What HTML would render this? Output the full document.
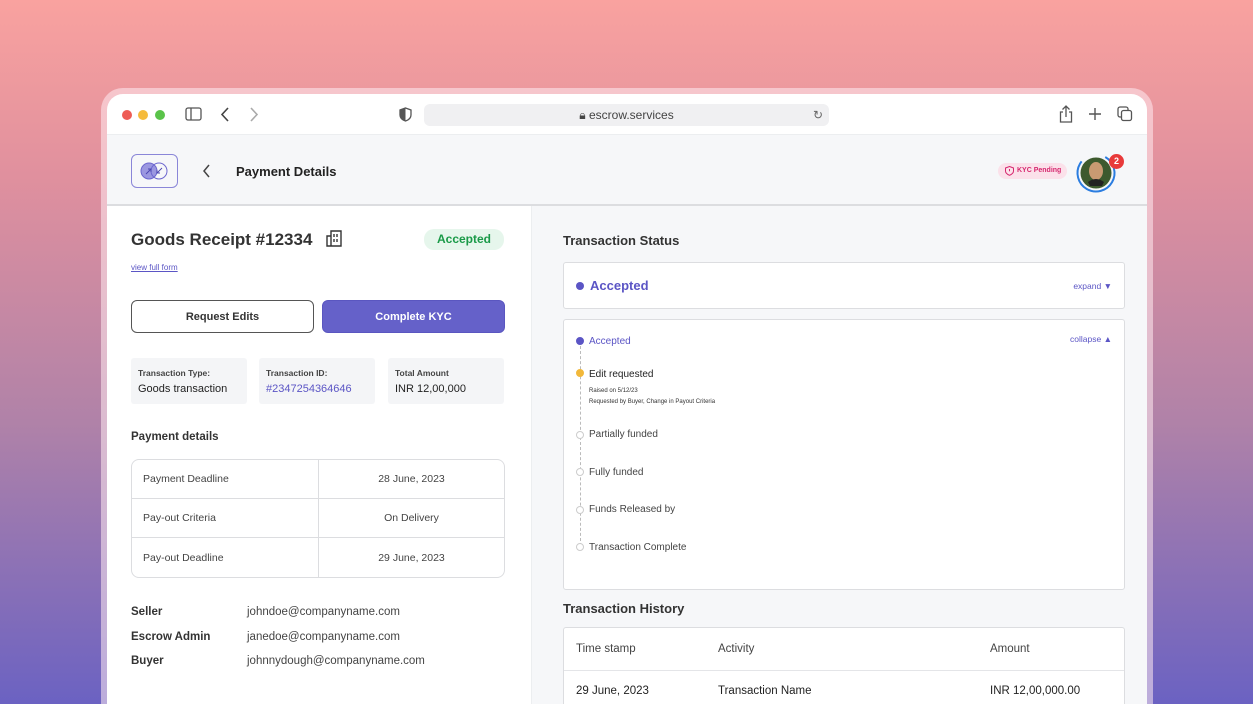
<!DOCTYPE html>
<html style="overflow:hidden;width:1253px;height:704px"><head><meta charset="utf-8"><style>
*{box-sizing:border-box;margin:0;padding:0}
body{width:1253px;height:704px;overflow:hidden;font-family:"Liberation Sans",sans-serif;background:linear-gradient(180deg,#f9a29f 0%,#e0909e 25%,#b082a8 60%,#6b62c2 100%);position:relative;color:#222}
.frame{position:absolute;left:101px;top:88px;width:1052px;height:616px;border-radius:22px 22px 0 0;background:rgba(255,235,240,.55)}
.win{position:absolute;left:107px;top:94px;width:1040px;height:610px;border-radius:16px 16px 0 0;background:#fff;overflow:hidden}
.tb{height:41px;border-bottom:1px solid #eceef0;position:relative}
.dot{position:absolute;top:16px;width:10px;height:10px;border-radius:50%}
.url{position:absolute;left:317px;top:10px;width:405px;height:22px;background:#f0f0f2;border-radius:6px;font-size:12px;color:#444;text-align:center;line-height:22px}
.hdr{position:absolute;top:41px;left:0;width:1040px;height:71px;background:#f6f7f9;border-bottom:2px solid #dcdde0}
.logo{position:absolute;left:24px;top:19px;width:47px;height:34px;border:1.5px solid #8a86d8;border-radius:6px}
.left{position:absolute;left:0;top:112px;width:424px;height:498px;background:#fff;overflow:hidden}
.right{position:absolute;left:424px;top:112px;width:616px;height:498px;background:#f6f7f9;border-left:1px solid #eceef0;overflow:hidden}
.abs{position:absolute}
.btn{position:absolute;top:94px;width:183px;height:33px;border-radius:6px;font-size:11px;font-weight:bold;text-align:center;line-height:33px}
.card{position:absolute;top:152px;height:46px;background:#f4f5f7;border-radius:3px;padding:10px 7px;font-size:11px}
.card .l{font-size:8.5px;color:#444;margin-bottom:5px;font-weight:bold}
table{position:absolute;left:24px;top:253px;width:374px;border-collapse:separate;border-spacing:0;border:1px solid #dcdde0;border-radius:8px;font-size:10.5px;color:#444}
td{height:39px;border-bottom:1px solid #dcdde0;padding-left:11px}
tr:last-child td{border-bottom:none}
td+td{border-left:1px solid #dcdde0;text-align:center;padding:0}
.box{position:absolute;left:31px;width:562px;background:#fff;border:1px solid #dcdde0;border-radius:3px}
.st{position:absolute;left:14px;font-size:10px;color:#444}
.c{position:absolute;left:12px;width:8px;height:8px;border-radius:50%;border:1.3px solid #ccc;background:#fff}
</style></head><body>
<div class="frame"></div>
<div class="win">
 <div class="tb">
  <div class="dot" style="left:15px;background:#ee5c55"></div>
  <div class="dot" style="left:31px;background:#f5bb3c"></div>
  <div class="dot" style="left:48px;background:#5ac34a"></div>
  <svg class="abs" style="left:78px;top:13px" width="17" height="14"><rect x="1" y="1" width="15" height="12" rx="2" fill="none" stroke="#555" stroke-width="1.3"/><line x1="6" y1="1" x2="6" y2="13" stroke="#555" stroke-width="1.3"/></svg>
  <svg class="abs" style="left:113px;top:13px" width="10" height="15"><path d="M8 1L2 7.5 8 14" fill="none" stroke="#444" stroke-width="1.6"/></svg>
  <svg class="abs" style="left:142px;top:13px" width="10" height="15"><path d="M2 1l6 6.5L2 14" fill="none" stroke="#aaa" stroke-width="1.6"/></svg>
  <svg class="abs" style="left:292px;top:13px" width="13" height="15"><path d="M6.5 1L12 3v5c0 3-2.5 5-5.5 6C3.5 13 1 11 1 8V3z" fill="none" stroke="#555" stroke-width="1.3"/><path d="M6.5 1L1 3v5c0 3 2.5 5 5.5 6z" fill="#555"/></svg>
  <div class="url">🔒︎ escrow.services<span style="position:absolute;right:6px;color:#666">↻</span></div>
  <svg class="abs" style="left:952px;top:11px" width="14" height="18"><path d="M7 1v11M3.5 4.5L7 1l3.5 3.5M4 7H1.5v10h11V7H10" fill="none" stroke="#555" stroke-width="1.3"/></svg>
  <svg class="abs" style="left:981px;top:13px" width="14" height="14"><path d="M7 1v12M1 7h12" stroke="#555" stroke-width="1.4"/></svg>
  <svg class="abs" style="left:1010px;top:12px" width="16" height="16"><rect x="1" y="1" width="10" height="10" rx="2" fill="none" stroke="#555" stroke-width="1.3"/><rect x="4.5" y="4.5" width="10" height="10" rx="2" fill="#fff" stroke="#555" stroke-width="1.3"/></svg>
 </div>
 <div class="hdr">
  <div class="logo"><svg width="44" height="31"><circle cx="17" cy="16" r="8" fill="#9b97e0" stroke="#6d67cf"/><circle cx="27" cy="16" r="8" fill="none" stroke="#6d67cf"/><path d="M14 19l5-5M16 14h3v3M30 13l-5 5M25 15v3h3" stroke="#4b45b0" fill="none" stroke-width=".9"/></svg></div>
  <svg class="abs" style="left:95px;top:29px" width="9" height="14"><path d="M7 1L2 7l5 6" fill="none" stroke="#444" stroke-width="1.5"/></svg>
  <div class="abs" style="left:129px;top:29px;font-size:13px;font-weight:bold;color:#222">Payment Details</div>
  <div class="abs" style="left:891px;top:28px;width:69px;height:16px;border-radius:8px;background:#fbe1ea;color:#d6286f;font-size:7px;font-weight:bold;line-height:16px;padding-left:19px">KYC Pending<svg class="abs" style="left:7px;top:3px" width="9" height="10"><path d="M4.5.5L8.5 2v3c0 2-2 3.5-4 4.3C2.5 8.5.5 7 .5 5V2z" fill="none" stroke="#d6286f"/><path d="M4.5 3v2.3" stroke="#d6286f"/></svg></div>
  <svg class="abs" style="left:968px;top:17px" width="42" height="42"><circle cx="21" cy="21" r="18.5" fill="none" stroke="#2b7de0" stroke-width="2" stroke-dasharray="90 30" transform="rotate(-60 21 21)"/><circle cx="21" cy="21" r="15.5" fill="#3d5a2e"/><ellipse cx="21" cy="19" rx="7" ry="9" fill="#c99a72"/><path d="M13 30q8-6 16 0l-2 4h-12z" fill="#222"/></svg>
  <div class="abs" style="left:1002px;top:19px;width:15px;height:15px;border-radius:50%;background:#e83a3a;color:#fff;font-size:9px;font-weight:bold;text-align:center;line-height:15px">2</div>
 </div>
 <div class="left">
  <div class="abs" style="left:24px;top:24px;font-size:17px;font-weight:bold;color:#333">Goods Receipt #12334</div>
  <svg class="abs" style="left:218px;top:23px" width="19" height="19"><path d="M2 17V7h4V2h10v15zM6 7v10M9 5v3M12 5v3M9 10v3M12 10v3" fill="none" stroke="#333" stroke-width="1.4"/></svg>
  <div class="abs" style="left:317px;top:23px;width:80px;height:21px;border-radius:10px;background:#e6f6ec;color:#1a9a48;font-size:12px;font-weight:bold;text-align:center;line-height:21px">Accepted</div>
  <div class="abs" style="left:24px;top:57px;font-size:8px;color:#5b55c5;text-decoration:underline">view full form</div>
  <div class="btn" style="left:24px;border:1px solid #555;color:#333;background:#fff">Request Edits</div>
  <div class="btn" style="left:215px;background:#6561c9;color:#fff;border:1px solid #5a56c0">Complete KYC</div>
  <div class="card" style="left:24px;width:116px"><div class="l">Transaction Type:</div>Goods transaction</div>
  <div class="card" style="left:152px;width:116px"><div class="l">Transaction ID:</div><span style="color:#5b55c5">#2347254364646</span></div>
  <div class="card" style="left:281px;width:116px"><div class="l">Total Amount</div>INR 12,00,000</div>
  <div class="abs" style="left:24px;top:225px;font-size:11.5px;font-weight:bold;color:#333">Payment details</div>
  <table><tr><td style="width:186px">Payment Deadline</td><td>28 June, 2023</td></tr><tr><td>Pay-out Criteria</td><td>On Delivery</td></tr><tr><td>Pay-out Deadline</td><td>29 June, 2023</td></tr></table>
  <div class="abs" style="left:24px;top:394px;font-size:11.5px;font-weight:bold;line-height:24.5px;color:#333">Seller<br>Escrow Admin<br>Buyer</div>
  <div class="abs" style="left:140px;top:394px;font-size:11.5px;line-height:24.5px;color:#444">johndoe@companyname.com<br>janedoe@companyname.com<br>johnnydough@companyname.com</div>
 </div>
 <div class="right">
  <div class="abs" style="left:31px;top:27px;font-size:13px;font-weight:bold;color:#333">Transaction Status</div>
  <div class="box" style="top:56px;height:47px">
   <div class="abs" style="left:12px;top:19px;width:8px;height:8px;border-radius:50%;background:#5b55c5"></div>
   <div class="abs" style="left:26px;top:15px;font-size:13px;font-weight:bold;color:#5b55c5">Accepted</div>
   <div class="abs" style="right:12px;top:18px;font-size:8.5px;color:#5b55c5">expand ▼</div>
  </div>
  <div class="box" style="top:113px;height:271px">
   <div class="abs" style="right:12px;top:14px;font-size:8.5px;color:#5b55c5">collapse ▲</div>
   <div class="abs" style="left:15.5px;top:26px;height:200px;border-left:1px dashed #bbb"></div>
   <div class="c" style="top:17px;background:#5b55c5;border-color:#5b55c5"></div><div class="st" style="left:25px;top:16px;color:#5b55c5">Accepted</div>
   <div class="c" style="top:49px;background:#f2b83a;border-color:#f2b83a"></div><div class="st" style="left:25px;top:49px;color:#222">Edit requested</div>
   <div class="st" style="left:25px;top:66px;font-size:6px;line-height:11px;color:#333">Raised on 5/12/23<br>Requested by Buyer, Change in Payout Criteria</div>
   <div class="c" style="top:111px"></div><div class="st" style="left:25px;top:109px">Partially funded</div>
   <div class="c" style="top:148px"></div><div class="st" style="left:25px;top:147px">Fully funded</div>
   <div class="c" style="top:186px"></div><div class="st" style="left:25px;top:184px">Funds Released by</div>
   <div class="c" style="top:223px"></div><div class="st" style="left:25px;top:222px">Transaction Complete</div>
  </div>
  <div class="abs" style="left:31px;top:395px;font-size:13px;font-weight:bold;color:#333">Transaction History</div>
  <div class="box" style="top:421px;height:80px;font-size:11.5px;border-bottom:none">
   <div class="abs" style="left:0;top:42px;width:560px;border-top:1px solid #e4e5e8"></div>
   <div class="abs" style="left:12px;top:15px;color:#444">Time stamp</div>
   <div class="abs" style="left:154px;top:15px;color:#444">Activity</div>
   <div class="abs" style="left:426px;top:15px;color:#444">Amount</div>
   <div class="abs" style="left:12px;top:57px;color:#222">29 June, 2023</div>
   <div class="abs" style="left:154px;top:57px;color:#222">Transaction Name</div>
   <div class="abs" style="left:426px;top:57px;color:#222">INR 12,00,000.00</div>
  </div>
 </div>
</div>
</body></html>
